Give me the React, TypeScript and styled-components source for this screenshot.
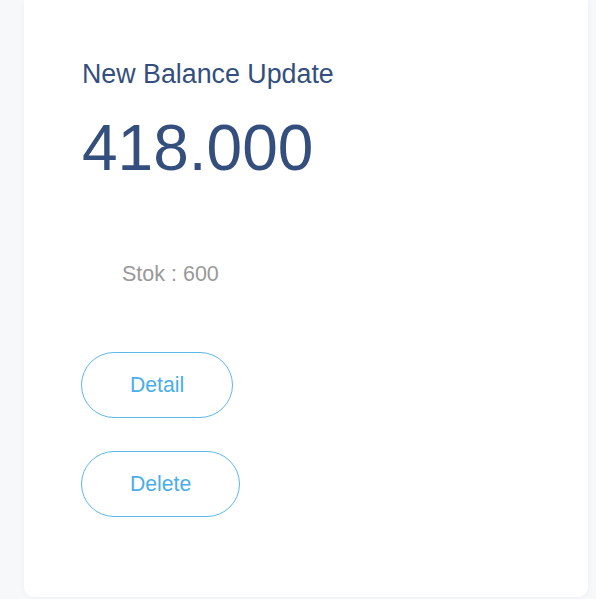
import React from 'react';
import styled, { createGlobalStyle } from 'styled-components';

const GlobalStyle = createGlobalStyle`
    html, body {
        margin: 0;
        padding: 0;
        background: #f7f8fa;
        font-family: 'Liberation Sans', Arial, sans-serif;
    }
`;

const Page = styled.div`
    padding: 0 8px 2px 24px;
`;

const Card = styled.div`
    background: white;
    border-radius: 0 0 10px 10px;
    box-shadow: 0 0 6px rgba(40, 60, 100, 0.05);
    height: 597px;
    box-sizing: border-box;
    padding: 59px 57px 0 57px;
    display: flex;
    flex-direction: column;
    align-items: flex-start;
`;

const Title = styled.h2`
    margin: 0 0 0 1px;
    font-size: 26.8px;
    line-height: 30px;
    font-weight: 400;
    color: #344f7d;
`;

const Amount = styled.div`
    margin-top: 27px;
    margin-left: 1px;
    font-size: 64px;
    line-height: 64px;
    color: #344f7d;
`;

const Stock = styled.div`
    margin-top: 82px;
    margin-left: 41px;
    font-size: 21.5px;
    line-height: 24px;
    color: #999999;
`;

const Actions = styled.div`
    margin-top: 66px;
    display: flex;
    flex-direction: column;
    align-items: flex-start;
    gap: 33px;
`;

const OutlineButton = styled.button`
    height: 66px;
    padding: 0 48px;
    border: 1px solid #5bb8ea;
    border-radius: 33px;
    background: white;
    color: #4aaee8;
    font-family: 'Liberation Sans', Arial, sans-serif;
    font-size: 21.2px;
    cursor: pointer;
`;

const App = () => {
    return (
        <>
            <GlobalStyle />
            <Page>
                <Card>
                    <Title>New Balance Update</Title>
                    <Amount>418.000</Amount>
                    <Stock>Stok : 600</Stock>
                    <Actions>
                        <OutlineButton>Detail</OutlineButton>
                        <OutlineButton>Delete</OutlineButton>
                    </Actions>
                </Card>
            </Page>
        </>
    );
};

export default App;
